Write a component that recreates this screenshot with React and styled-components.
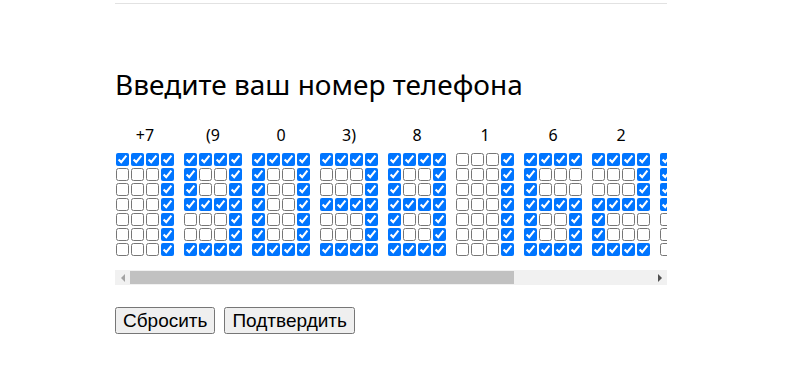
import styled, { createGlobalStyle } from 'styled-components';
import { useEffect, useRef, useState } from 'react';

const GlobalStyle = createGlobalStyle`
  body {
    margin: 0;
    background: #fff;
    font-family: "Noto Sans", Roboto, sans-serif;
    color: #000;
  }
`;

const Page = styled.div`
  width: 552px;
  margin-left: calc((100% - 555px) / 2);
`;

const TopRule = styled.div`
  height: 1px;
  margin-top: 3px;
  background: #e2e2e2;
`;

const Title = styled.h2`
  margin: 65px 0 0;
  font-family: "Noto Sans", Roboto, sans-serif;
  font-weight: 400;
  font-size: 28px;
  line-height: 30px;
`;

const Scroller = styled.div`
  margin-top: 25px;
  overflow: hidden;
  padding-bottom: 13px;
`;

const Digits = styled.div`
  display: flex;
  gap: 8px;
  width: max-content;
  padding-right: 10px;
`;

const Group = styled.div`
  display: flex;
  flex-direction: column;
  align-items: center;
  width: 60px;
`;

const Label = styled.div`
  font-size: 16px;
  line-height: 22px;
  height: 22px;
  margin-bottom: 6px;
`;

const Grid = styled.div`
  display: grid;
  grid-template-columns: repeat(4, 15px);
  grid-auto-rows: 15px;
`;

const Box = styled.input`
  width: 13px;
  height: 13px;
  margin: 1px;
`;

const ScrollBar = styled.div`
  display: flex;
  height: 15px;
  background: #f1f1f1;
`;

const Arrow = styled.button`
  width: 15px;
  height: 15px;
  padding: 0;
  border: 0;
  background: #f1f1f1;
  display: flex;
  align-items: center;
  justify-content: center;

  &::before {
    content: '';
    width: 0;
    height: 0;
    border-top: 4px solid transparent;
    border-bottom: 4px solid transparent;
    ${({ $dir, $active }) => $dir === 'left'
      ? `border-right: 4px solid ${$active ? '#505050' : '#a3a3a3'};`
      : `border-left: 4px solid ${$active ? '#505050' : '#a3a3a3'};`}
  }
`;

const Track = styled.div`
  flex: 1;
  display: flex;
  align-items: center;
`;

const Thumb = styled.div`
  height: 13px;
  background: #c1c1c1;
`;

const Actions = styled.div`
  display: flex;
  gap: 9px;
  margin-top: 22px;
`;

const Button = styled.button`
  font-family: "Liberation Sans", Arial, sans-serif;
  font-size: 19px;
  line-height: 21px;
`;

const FONT = {
  0: ['XXXX', 'X..X', 'X..X', 'X..X', 'X..X', 'X..X', 'XXXX'],
  1: ['...X', '...X', '...X', '...X', '...X', '...X', '...X'],
  2: ['XXXX', '...X', '...X', 'XXXX', 'X...', 'X...', 'XXXX'],
  3: ['XXXX', '...X', '...X', 'XXXX', '...X', '...X', 'XXXX'],
  4: ['X..X', 'X..X', 'X..X', 'XXXX', '...X', '...X', '...X'],
  5: ['XXXX', 'X...', 'X...', 'XXXX', '...X', '...X', 'XXXX'],
  6: ['XXXX', 'X...', 'X...', 'XXXX', 'X..X', 'X..X', 'XXXX'],
  7: ['XXXX', '...X', '...X', '...X', '...X', '...X', '...X'],
  8: ['XXXX', 'X..X', 'X..X', 'XXXX', 'X..X', 'X..X', 'XXXX'],
  9: ['XXXX', 'X..X', 'X..X', 'XXXX', '...X', '...X', 'XXXX'],
};

const NUMBER = [
  { label: '+7', digit: 7 },
  { label: '(9', digit: 9 },
  { label: '0', digit: 0 },
  { label: '3)', digit: 3 },
  { label: '8', digit: 8 },
  { label: '1', digit: 1 },
  { label: '6', digit: 6 },
  { label: '2', digit: 2 },
  { label: '4', digit: 4 },
  { label: '5', digit: 5 },
  { label: '7', digit: 7 },
];

const toCells = (digit) => FONT[digit].join('').split('').map(c => c === 'X');

const DigitGrid = ({ label, cells, onToggle }) => (
  <Group>
    <Label>{label}</Label>
    <Grid>
      {cells.map((checked, i) => (
        <Box key={i} type="checkbox" checked={checked} onChange={() => onToggle(i)}/>
      ))}
    </Grid>
  </Group>
);

export default function App() {
  const [grids, setGrids] = useState(() => NUMBER.map(n => toCells(n.digit)));
  const [bar, setBar] = useState({ ratio: 1, pos: 0, max: 0 });
  const scrollRef = useRef(null);
  const trackRef = useRef(null);

  const measure = () => {
    const el = scrollRef.current;
    if (!el) return;
    const max = el.scrollWidth - el.clientWidth;
    setBar({ ratio: el.clientWidth / el.scrollWidth, pos: el.scrollLeft, max });
  };

  useEffect(() => {
    measure();
    window.addEventListener('resize', measure);
    return () => window.removeEventListener('resize', measure);
  }, []);

  const scrollBy = (dx) => {
    scrollRef.current.scrollLeft += dx;
    measure();
  };

  const handleToggle = (g, i) => {
    setGrids(prev => prev.map((cells, gi) => gi !== g ? cells : cells.map((c, ci) => ci === i ? !c : c)));
  };

  const handleReset = () => {
    setGrids(NUMBER.map(n => toCells(n.digit)));
  };

  const trackWidth = trackRef.current ? trackRef.current.clientWidth : 522;
  const thumbWidth = Math.round(trackWidth * bar.ratio);
  const thumbOffset = bar.max ? Math.round((trackWidth - thumbWidth) * bar.pos / bar.max) : 0;

  return (<>
    <GlobalStyle/>
    <Page>
      <TopRule/>
      <Title>Введите ваш номер телефона</Title>
      <Scroller ref={scrollRef} onScroll={measure}>
        <Digits>
          {NUMBER.map((n, g) => (
            <DigitGrid key={g} label={n.label} cells={grids[g]} onToggle={(i) => handleToggle(g, i)}/>
          ))}
        </Digits>
      </Scroller>
      <ScrollBar>
        <Arrow type="button" aria-label="left" $dir="left" $active={bar.pos > 0} onClick={() => scrollBy(-40)}/>
        <Track ref={trackRef}>
          <Thumb style={{ width: thumbWidth, marginLeft: thumbOffset }}/>
        </Track>
        <Arrow type="button" aria-label="right" $dir="right" $active={bar.pos < bar.max} onClick={() => scrollBy(40)}/>
      </ScrollBar>
      <Actions>
        <Button type="button" onClick={handleReset}>Сбросить</Button>
        <Button type="button">Подтвердить</Button>
      </Actions>
    </Page>
  </>);
}
